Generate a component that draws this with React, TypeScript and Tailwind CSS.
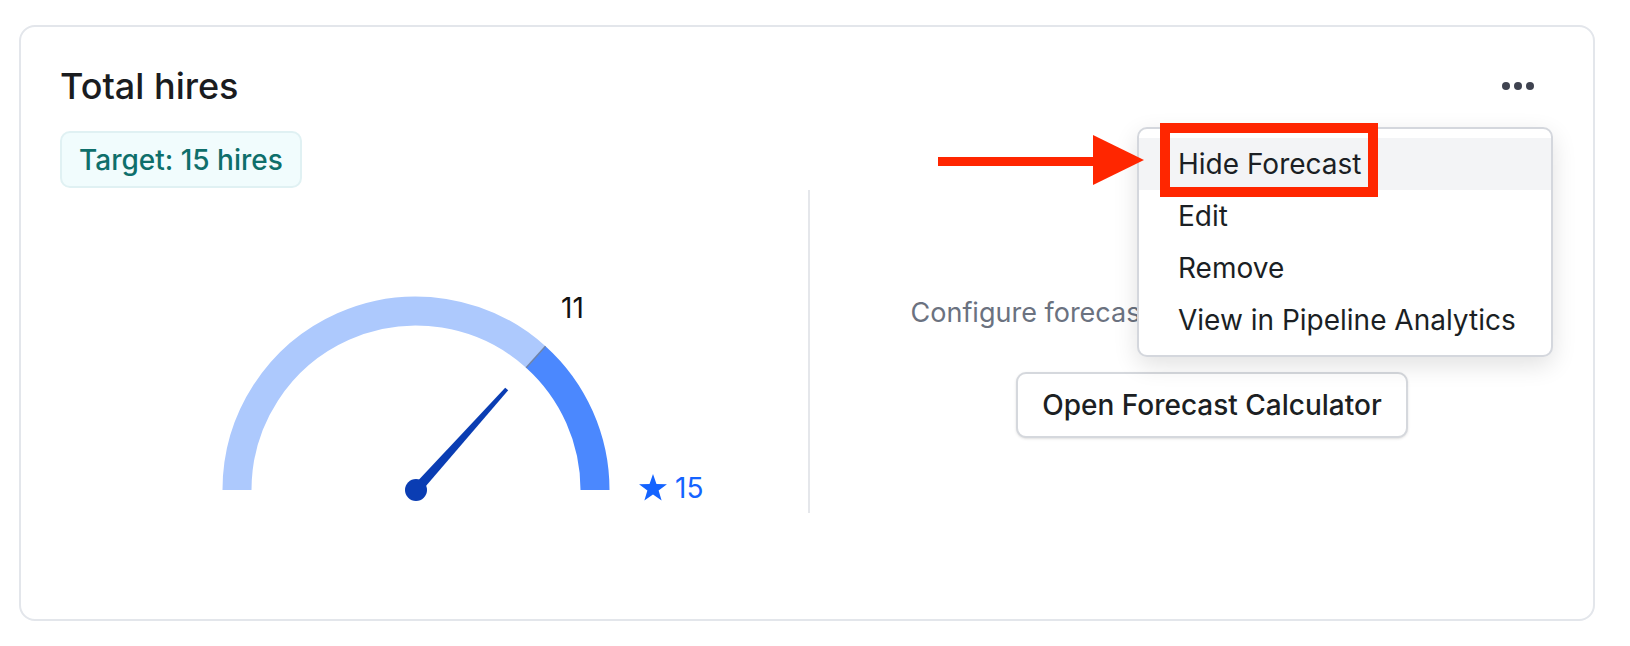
import React from "react";

const menuItems = ["Hide Forecast", "Edit", "Remove", "View in Pipeline Analytics"];

function Gauge() {
  // 11 of 15 hires, needle and split sit at 48deg
  return (
    <svg width="748" height="323" viewBox="0 0 748 323" className="block">
      <path d="M177 300 A179 179 0 0 1 475.8 167.0" fill="none" stroke="#adc9fd" strokeWidth="29" />
      <path d="M475.8 167.0 A179 179 0 0 1 535 300" fill="none" stroke="#4b88fe" strokeWidth="29" />
      <line x1="466.1" y1="177.8" x2="485.5" y2="156.2" stroke="#6f84a8" strokeWidth="1.5" />
      <polygon points="359.7,303.3 448.2,200.3 445.2,197.7 352.3,296.7" fill="#0a3db3" />
      <circle cx="356" cy="300" r="11" fill="#0a3db3" />
      <text x="501" y="128.3" fontFamily="Inter, sans-serif" fontSize="28" fill="#111111">
        11
      </text>
      <path
        d="M593 284 L596.47 293.93 L606.98 294.16 L598.61 300.52 L601.64 310.59 L593 304.6 L584.36 310.59 L587.39 300.52 L579.02 294.16 L589.53 293.93 Z"
        fill="#1463ff"
      />
      <text x="615" y="308.3" fontFamily="Inter, sans-serif" fontSize="28" fill="#1463ff">
        15
      </text>
    </svg>
  );
}

export default function App() {
  return (
    <div className="h-[646px] w-full bg-white pl-[19px] pr-[35px] pt-[25px] font-['Inter',sans-serif]">
      <div className="relative h-[596px] rounded-2xl border-2 border-[#e3e6eb] bg-white px-[39px] pt-[41px]">
        {/* Header */}
        <div className="flex items-center justify-between">
          <h2 className="text-[36px] font-medium leading-none text-[#1a1c1f]">Total hires</h2>
          <div className="mr-[20px] flex gap-[4px]">
            <span className="h-[8px] w-[8px] rounded-full bg-[#3f4350]" />
            <span className="h-[8px] w-[8px] rounded-full bg-[#3f4350]" />
            <span className="h-[8px] w-[8px] rounded-full bg-[#3f4350]" />
          </div>
        </div>

        <div className="mt-[27px] flex">
          <span className="inline-flex h-[57px] items-center rounded-[10px] border-2 border-[#e0f1f3] bg-[#f1fcfd] px-[17px] text-[28px] font-medium leading-none text-[#0e6f6b]">
            Target: 15 hires
          </span>
        </div>

        {/* Body */}
        <div className="mt-[2px] flex h-[323px]">
          <div className="w-[748px] shrink-0">
            <Gauge />
          </div>
          <div className="w-[2px] shrink-0 bg-[#e5e7eb]" />
          <div className="flex flex-1 flex-col items-center pl-[60px] pt-[109px]">
            <p className="whitespace-nowrap text-[27px] leading-none text-[#6b7280]">
              Configure forecast settings to view projections.
            </p>
            <button className="mt-[46px] h-[66px] rounded-[10px] border-2 border-[#d5d8dd] bg-white px-[24px] text-[28px] font-medium text-[#1c1f23] shadow-sm">
              Open Forecast Calculator
            </button>
          </div>
        </div>

        {/* Dropdown menu */}
        <div className="absolute left-[1116px] top-[100px] w-[416px] rounded-[10px] border-2 border-[#d4d7dd] bg-white py-[9px] shadow-[0_8px_24px_rgba(0,0,0,0.12)]">
          {menuItems.map((item, i) => (
            <div
              key={item}
              className={
                "flex h-[52px] items-center pl-[39px] text-[28px] text-[#1b1f24] " +
                (i === 0 ? "bg-[#f3f4f6]" : "")
              }
            >
              {item}
            </div>
          ))}
        </div>

        {/* Annotation */}
        <svg width="206" height="50" viewBox="0 0 206 50" className="absolute left-[917px] top-[108px]">
          <rect x="0" y="22" width="157" height="9" fill="#ff2600" />
          <polygon points="155,0 206,25 155,50" fill="#ff2600" />
        </svg>
        <div className="absolute left-[1139px] top-[96px] h-[74px] w-[218px] border-[10px] border-[#ff2600]" />
      </div>
    </div>
  );
}
